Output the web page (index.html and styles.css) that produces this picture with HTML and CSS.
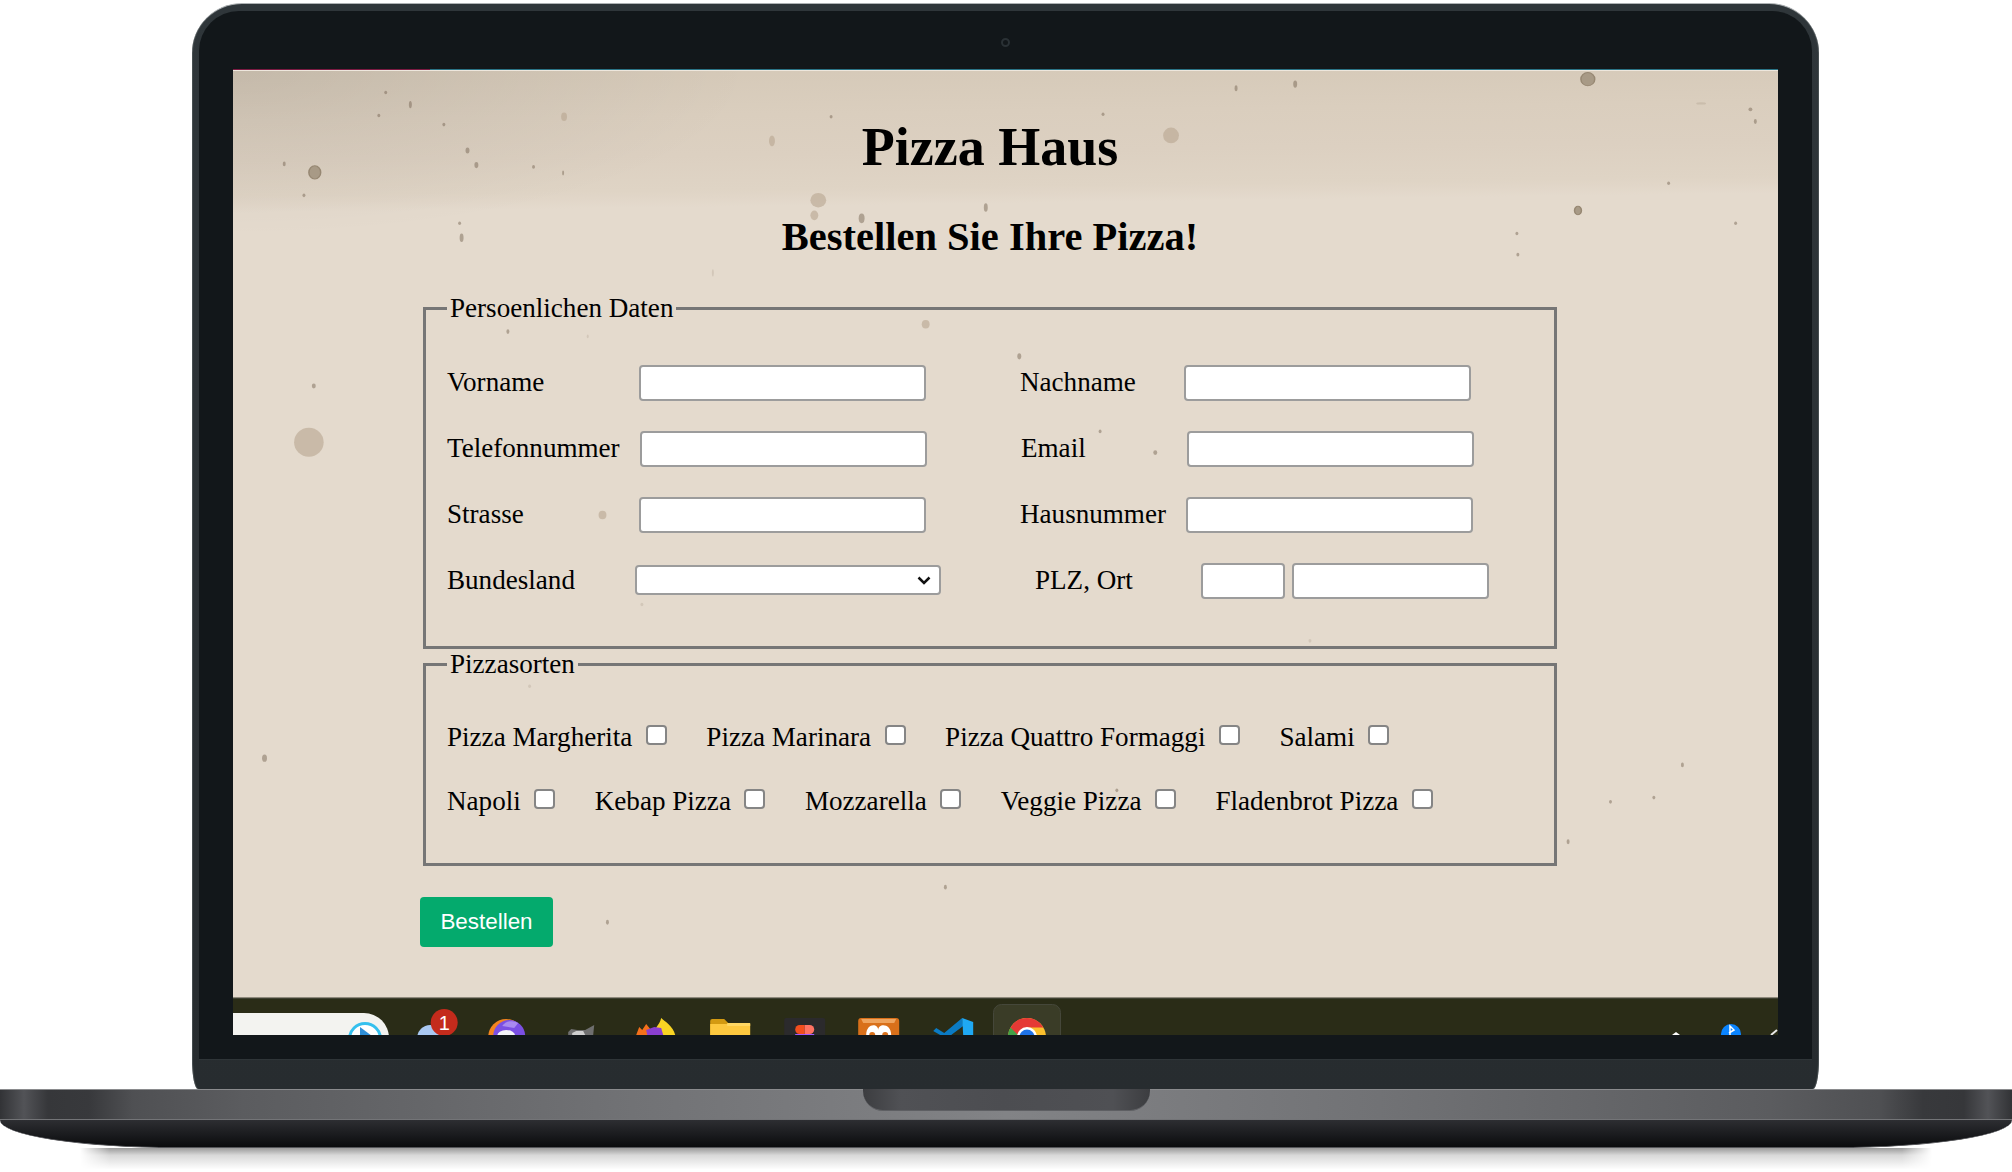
FILE: index.html
```html
<!DOCTYPE html>
<html lang="de">
<head>
<meta charset="utf-8">
<title>Pizza Haus</title>
<link rel="stylesheet" href="styles.css">
</head>
<body>
<div class="laptop">
  <div class="lid">
    <div class="bezel">
      <span class="camera"></span>
      <div class="screen">
        <div class="paper">
          <svg class="specks" viewBox="0 16.5 1568 1530" preserveAspectRatio="none" aria-hidden="true">
            <g class="speck-soft">
              <ellipse cx="77" cy="630" rx="15" ry="24"/>
              <ellipse cx="952" cy="123" rx="8" ry="13"/>
              <ellipse cx="594" cy="230" rx="8" ry="12"/>
              <ellipse cx="590" cy="255" rx="4" ry="8"/>
              <ellipse cx="703" cy="435" rx="4" ry="7"/>
              <ellipse cx="375" cy="750" rx="4" ry="7"/>
              <ellipse cx="547" cy="132" rx="3" ry="9"/>
              <ellipse cx="336" cy="92" rx="3" ry="7"/>
            </g>
            <g class="speck-ring">
              <ellipse cx="1375" cy="30" rx="7" ry="11"/>
              <ellipse cx="83" cy="184" rx="6" ry="11"/>
              <ellipse cx="1365" cy="247" rx="3.5" ry="7"/>
            </g>
            <g class="speck-dot">
              <ellipse cx="155" cy="52" rx="1.5" ry="3"/><ellipse cx="180" cy="72" rx="1.5" ry="6"/><ellipse cx="148" cy="90" rx="1.5" ry="3"/>
              <ellipse cx="214" cy="105" rx="1.5" ry="3"/><ellipse cx="238" cy="148" rx="2" ry="5"/><ellipse cx="247" cy="172" rx="2" ry="5"/>
              <ellipse cx="305" cy="175" rx="1.5" ry="3"/><ellipse cx="335" cy="185" rx="1" ry="4"/><ellipse cx="52" cy="170" rx="1.5" ry="4"/>
              <ellipse cx="72" cy="222" rx="1.5" ry="3"/><ellipse cx="607" cy="92" rx="1.5" ry="3"/><ellipse cx="638" cy="260" rx="3" ry="8"/>
              <ellipse cx="764" cy="242" rx="2" ry="7"/><ellipse cx="230" cy="268" rx="1.5" ry="3"/><ellipse cx="232" cy="292" rx="2" ry="7"/>
              <ellipse cx="1018" cy="45" rx="1.5" ry="5"/><ellipse cx="1078" cy="38" rx="2" ry="6"/>
              <ellipse cx="883" cy="88" rx="1.5" ry="3"/><ellipse cx="1540" cy="80" rx="2" ry="3"/>
              <ellipse cx="1545" cy="100" rx="1.5" ry="4"/><ellipse cx="1457" cy="202" rx="1.5" ry="3"/><ellipse cx="1525" cy="268" rx="1.5" ry="3"/>
              <ellipse cx="1303" cy="285" rx="1.5" ry="3"/><ellipse cx="1304" cy="320" rx="1.5" ry="3"/><ellipse cx="279" cy="447" rx="1.5" ry="4"/>
              <ellipse cx="798" cy="488" rx="2" ry="5"/><ellipse cx="82" cy="537" rx="2" ry="4"/>
              <ellipse cx="880" cy="612" rx="1.5" ry="3"/><ellipse cx="936" cy="647" rx="2" ry="4"/>
              <ellipse cx="32" cy="1152" rx="2.5" ry="6"/><ellipse cx="1471" cy="1163" rx="1.5" ry="4"/>
              <ellipse cx="1398" cy="1224" rx="1.5" ry="3"/><ellipse cx="1442" cy="1217" rx="1.5" ry="3"/><ellipse cx="1355" cy="1290" rx="1.5" ry="4"/>
              <ellipse cx="897" cy="1205" rx="1.5" ry="3"/><ellipse cx="723" cy="1365" rx="1.5" ry="4"/><ellipse cx="380" cy="1423" rx="1.5" ry="4"/>
            </g>
            <g class="speck-faint">
              <ellipse cx="487" cy="350" rx="1" ry="6"/><ellipse cx="360" cy="455" rx="1" ry="3"/><ellipse cx="415" cy="898" rx="1.5" ry="3"/>
              <ellipse cx="301" cy="1033" rx="1.5" ry="3"/><ellipse cx="1093" cy="958" rx="1.5" ry="3"/><ellipse cx="1490" cy="70" rx="5" ry="2"/>
            </g>
          </svg>
          <main class="content">
            <h1 class="title">Pizza Haus</h1>
            <h2 class="subtitle">Bestellen Sie Ihre Pizza!</h2>
            <form class="order">
              <fieldset class="group group-person">
                <legend class="legend">Persoenlichen Daten</legend>
                <div class="fields">
                  <label class="field"><span class="name w192">Vorname</span><input class="text" type="text"></label>
                  <label class="field"><span class="name w164">Nachname</span><input class="text" type="text"></label>
                  <label class="field"><span class="name w193">Telefonnummer</span><input class="text" type="text"></label>
                  <label class="field shift1"><span class="name w166">Email</span><input class="text" type="text"></label>
                  <label class="field"><span class="name w192">Strasse</span><input class="text" type="text"></label>
                  <label class="field"><span class="name w166">Hausnummer</span><input class="text" type="text"></label>
                  <label class="field"><span class="name w188">Bundesland</span>
                    <span class="select-wrap">
                      <select class="select"><option></option></select>
                      <svg class="chevron" viewBox="0 0 14 9" aria-hidden="true"><path d="M1.5 1.5 7 7l5.5-5.5"/></svg>
                    </span>
                  </label>
                  <div class="field shift15"><span class="name w166">PLZ, Ort</span><input class="text zip" type="text"><input class="text city" type="text"></div>
                </div>
              </fieldset>
              <fieldset class="group group-pizza">
                <legend class="legend">Pizzasorten</legend>
                <div class="pizza-row">
                  <label class="pizza">Pizza Margherita<input class="check" type="checkbox"></label>
                  <label class="pizza">Pizza Marinara<input class="check" type="checkbox"></label>
                  <label class="pizza">Pizza Quattro Formaggi<input class="check" type="checkbox"></label>
                  <label class="pizza">Salami<input class="check" type="checkbox"></label>
                </div>
                <div class="pizza-row">
                  <label class="pizza">Napoli<input class="check" type="checkbox"></label>
                  <label class="pizza">Kebap Pizza<input class="check" type="checkbox"></label>
                  <label class="pizza">Mozzarella<input class="check" type="checkbox"></label>
                  <label class="pizza">Veggie Pizza<input class="check" type="checkbox"></label>
                  <label class="pizza">Fladenbrot Pizza<input class="check" type="checkbox"></label>
                </div>
              </fieldset>
              <button class="submit" type="button">Bestellen</button>
            </form>
          </main>
        </div>
        <div class="taskbar">
          <div class="search">
            <svg class="search-icon" viewBox="0 0 34 22" aria-hidden="true">
              <circle cx="17" cy="17" r="15.5" fill="#fff" stroke="#35c0ee" stroke-width="3"/>
              <path d="M12 5 24 14 12 22Z" fill="#2f8fd8"/>
            </svg>
          </div>
          <div class="apps">
            <svg class="app" viewBox="0 0 74 31" aria-hidden="true">
              <circle cx="18" cy="34" r="13" fill="#a9c8f2"/>
              <circle cx="32" cy="18.5" r="13.5" fill="#c42b1c"/>
              <text class="badge" x="32" y="26">1</text>
            </svg>
            <svg class="app" viewBox="0 0 74 31" aria-hidden="true">
              <circle cx="20" cy="33" r="18" fill="#f5851f"/>
              <circle cx="23" cy="32" r="16" fill="#7b4fe3"/>
              <path d="M16 22a12 12 0 0 1 16-3l-4 5z" fill="#a98af0"/>
              <ellipse cx="20" cy="32" rx="9" ry="6" fill="#f4f4f8"/>
            </svg>
            <svg class="app" viewBox="0 0 74 31" aria-hidden="true">
              <path d="M7 28l3-3 6 1h8l9-5-1 10H7z" fill="#6f6f6f"/>
              <path d="M11 29l4-2 7 0 2 4H11z" fill="#cfcfcf"/>
            </svg>
            <svg class="app" viewBox="0 0 74 31" aria-hidden="true">
              <path d="M1 31l3-8 3 3 4-6 4 5 6 5v1z" fill="#f4701b"/>
              <path d="M19 31c0-8 5-9 7-17 3 3 12 8 14 17z" fill="#f9d423"/>
              <path d="M11 26l8-3 7 1 2 7H12z" fill="#8b3fd1"/>
            </svg>
            <svg class="app" viewBox="0 0 74 31" aria-hidden="true">
              <path d="M0 17a2 2 0 0 1 2-2h12l4 4v12H0z" fill="#d39a12"/>
              <path d="M0 20h40v11H0z" fill="#fdc83f"/>
              <path d="M17 19h23v3H17z" fill="#ffd763"/>
            </svg>
            <svg class="app" viewBox="0 0 74 31" aria-hidden="true">
              <rect y="14" width="41" height="20" rx="2" fill="#2b2a2c"/>
              <path d="M20.500 21h-5a4.500 4.500 0 0 0 0 9h5z" fill="#f24e1e"/>
              <path d="M20.500 21h5a4.500 4.500 0 0 1 0 9h-5z" fill="#ff7262"/>
              <path d="M11 30h19v2H11z" fill="#a259ff"/>
            </svg>
            <svg class="app" viewBox="0 0 74 31" aria-hidden="true">
              <rect y="14" width="41" height="20" rx="3" fill="#d9701a"/>
              <path d="M3 15h35l-2 4H5z" fill="#efa45e"/>
              <path d="M8 31c0-12 12-12 12-5 0-7 13-7 13 5z" fill="#fff"/>
              <circle cx="14" cy="31" r="3" fill="#d9701a"/><circle cx="27" cy="31" r="3" fill="#d9701a"/>
            </svg>
            <svg class="app" viewBox="0 0 74 31" aria-hidden="true">
              <path d="M0 27l3-3 8 5L29 14l1 8-12 9H7z" fill="#0b7bc4"/>
              <path d="M29 14l11 4v13H30z" fill="#1fa9f4"/>
            </svg>
            <svg class="app app-wide" viewBox="0 0 68 31" aria-hidden="true">
              <rect x=".5" y=".5" width="67" height="40" rx="8" fill="#3a3c27" stroke="#45473a"/>
              <circle cx="34" cy="33" r="19" fill="#fbc02d"/>
              <path d="M17.500 23.500a19 19 0 0 1 33 0H34L26 37z" fill="#e53935"/>
              <path d="M17.500 23.500A19 19 0 0 0 15 35h14z" fill="#43a047"/>
              <circle cx="34" cy="33" r="10" fill="#fff"/>
              <circle cx="34" cy="33" r="7.500" fill="#1e73e8"/>
            </svg>
          </div>
          <svg class="tray" viewBox="0 0 108 31" aria-hidden="true">
            <path d="M2 31l4-3 4 3z" fill="#fff"/>
            <circle cx="61" cy="30" r="10" fill="#0a84ff"/>
            <path d="M60 31v-9l4 4-5 3" fill="none" stroke="#fff" stroke-width="1.500"/>
            <path d="M101 31l6-5" fill="none" stroke="#e8e8e8" stroke-width="2"/>
          </svg>
        </div>
      </div>
    </div>
  </div>
  <div class="base">
    <div class="base-top"><span class="notch"></span></div>
    <div class="base-bottom"></div>
  </div>
  <div class="ground-shadow"></div>
</div>
</body>
</html>
```

FILE: styles.css
```css
* { box-sizing: border-box; }
html, body { margin: 0; height: 100%; background: #fff; overflow: hidden; }

.laptop { width: 2012px; height: 1172px; padding-top: 3px; }

.lid {
  width: 1627px;
  height: 1086px;
  margin-left: 192px;
  padding: 7px 7px 0;
  border-top: 1px solid #aeb2b4;
  background: linear-gradient(#2f363a, #272c2f);
  border-radius: 50px 50px 6px 6px / 50px 50px 30px 30px;
  box-shadow: inset 1px 0 0 #59606399, inset -1px 0 0 #59606399;
}
.bezel {
  position: relative;
  height: 1048px;
  padding: 58px 34px 24px;
  background: #12171a;
  border-radius: 40px 40px 0 0;
  box-shadow: 0 1px 0 #2f3538;
}
.camera {
  position: absolute;
  left: 802px;
  top: 27px;
  width: 9px;
  height: 9px;
  border: 2px solid #2a3135;
  border-radius: 50%;
}
.screen {
  display: flex;
  flex-direction: column;
  height: 966px;
  padding-top: 1px;
  overflow: hidden;
  background: linear-gradient(90deg, #7a1a42 197px, #2a7486 197px);
}

.paper {
  position: relative;
  height: 927px;
  padding-left: 190px;
  border-top: 1px solid #eee7dd;
  background:
    radial-gradient(ellipse 520px 165px at 0 0, #00000014, #00000000),
    linear-gradient(179.26deg, #d5c9b8 0, #dacebe 50px, #dcd0c1 90px, #dfd4c5 125px, #e1d6c8 132px, #e4dacd 142px);
}
.specks { position: absolute; left: 0; top: 0; width: 100%; height: 100%; filter: blur(.4px); }
.speck-soft ellipse { fill: #b7a58f; fill-opacity: .6; }
.speck-ring ellipse { fill: #a89a86; stroke: #978873; stroke-width: 1.5; }
.speck-dot ellipse { fill: #6f5e4b; fill-opacity: .45; }
.speck-faint ellipse { fill: #6f5e4b; fill-opacity: .15; }

.content { position: relative; width: 1134px; color: #000; font-family: "Liberation Serif", "Times New Roman", serif; }
.title { margin: 45px 0 0; font-size: 54px; line-height: 62px; font-weight: 700; text-align: center; }
.subtitle { margin: 35px 0 0; font-size: 40.500px; line-height: 47px; font-weight: 700; text-align: center; }

.group { margin: 0; padding: 0 21px; border: 3px solid #767676; min-width: 0; }
.group-person { margin-top: 33px; padding-top: 41px; padding-bottom: 47px; }
.group-pizza { padding-top: 42px; padding-bottom: 46px; }
.legend { padding: 0 3px; font-size: 27.100px; line-height: 31px; }

.fields { display: grid; grid-template-columns: 573px auto; row-gap: 30px; justify-content: start; }
.field { display: flex; align-items: center; height: 36px; font-size: 27.100px; }
.name { flex: none; padding-bottom: 2px; }
.w164 { width: 164px; }
.w166 { width: 166px; }
.w188 { width: 188px; }
.w192 { width: 192px; }
.w193 { width: 193px; }
.shift1 { margin-left: 1px; }
.shift15 { margin-left: 15px; }

.text {
  width: 287px;
  height: 36px;
  padding: 0 4px;
  background: #fff;
  border: 2px solid #9c9c9c;
  border-radius: 4px;
}
.zip { width: 84px; }
.city { width: 197px; margin-left: 7px; }

.select-wrap { position: relative; display: block; margin-top: -3px; }
.select {
  display: block;
  width: 306px;
  height: 30px;
  appearance: none;
  background: #fff;
  border: 2px solid #9c9c9c;
  border-radius: 4px;
}
.chevron { position: absolute; right: 10px; top: 11px; width: 14px; height: 9px; fill: none; stroke: #111; stroke-width: 2.500; pointer-events: none; }

.pizza-row { display: flex; gap: 39.500px; }
.pizza-row + .pizza-row { margin-top: 33px; }
.pizza { display: flex; align-items: center; gap: 13.500px; font-size: 27.100px; line-height: 31px; }
.check {
  width: 21px;
  height: 20px;
  margin: -5px 0 0;
  appearance: none;
  background: #fff;
  border: 2px solid #858585;
  border-radius: 4px;
}

.submit {
  display: block;
  width: 133px;
  height: 50px;
  margin: 31px 0 0 -3px;
  padding: 0;
  color: #fff;
  background: #04aa6d;
  border: 0;
  border-radius: 4px;
  font-family: "Liberation Sans", Arial, sans-serif;
  font-size: 22.400px;
}

.taskbar {
  position: relative;
  display: flex;
  align-items: flex-start;
  flex: none;
  height: 38px;
  padding-top: 6px;
  overflow: hidden;
  background: #2a2c17;
  border-top: 1px solid #8f8a7c;
  box-shadow: inset 0 1px 0 #3f4132;
}
.search {
  display: flex;
  justify-content: flex-end;
  flex: none;
  width: 156px;
  height: 30px;
  margin: 9px 23px 0 0;
  padding: 9px 7px 0 0;
  background: #f3f3f0;
  border-radius: 0 25px 0 0;
}
.search-icon { width: 34px; height: 22px; }
.apps { display: flex; flex: none; }
.app { flex: none; width: 74.400px; height: 31px; overflow: visible; }
.app-wide { width: 68px; margin-left: -14px; }
.badge { fill: #fff; font-family: "Liberation Sans", Arial, sans-serif; font-size: 20px; text-anchor: middle; }
.tray { flex: none; width: 108px; height: 31px; margin-left: auto; }

.base { position: relative; width: 2012px; height: 59px; }
.base-top {
  display: flex;
  justify-content: center;
  height: 31px;
  border-top: 1px solid #8a8b8d;
  border-bottom: 1px solid #737477;
  background: linear-gradient(90deg, #323336 0, #525357 24px, #36373a 48px, #38393c 89px, #4f5053 133px, #5b5c5f 242px, #717275 632px, #828386 1006px, #717275 1380px, #5b5c5f 1770px, #4f5053 1879px, #38393c 1923px, #36373a 1964px, #525357 1988px, #323336 2012px);
}
.notch {
  display: block;
  flex: none;
  width: 287px;
  height: 22px;
  margin-top: -1px;
  border-bottom: 1px solid #5e5f63;
  border-radius: 0 0 20px 20px;
  background: linear-gradient(90deg, #3c3d40 0, #505155 38px, #4c4d51 140px, #4f5054 250px, #3c3d40 287px);
}
.base-bottom {
  height: 28px;
  border-bottom: 1px solid #55565a;
  background: linear-gradient(#2d2e32, #0a0b0d);
  border-radius: 0 0 177px 177px / 0 0 28px 28px;
}
.ground-shadow {
  height: 24px;
  margin: 0 80px;
  background: linear-gradient(#9a9a9a, #d8d8d8 30%, #fff 90%);
  -webkit-mask-image: linear-gradient(90deg, #0000 0, #000 30px, #000 calc(100% - 30px), #0000 100%);
  mask-image: linear-gradient(90deg, #0000 0, #000 30px, #000 calc(100% - 30px), #0000 100%);
}
```
